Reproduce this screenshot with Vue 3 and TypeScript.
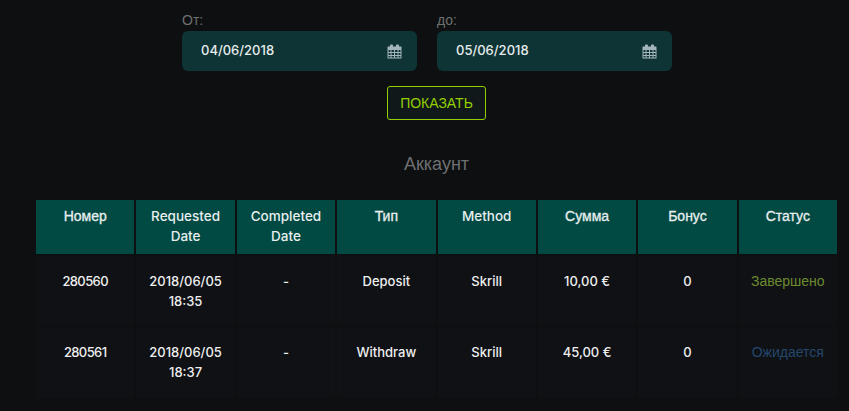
<script setup lang="ts">
interface Row {
  id: string;
  requested: string;
  time: string;
  type: string;
  amount: string;
  bonus: string;
  status: string;
  statusClass: string;
}

const rows: Row[] = [
  { id: "280560", requested: "2018/06/05", time: "18:35", type: "Deposit", amount: "10,00 €", bonus: "0", status: "Завершено", statusClass: "done" },
  { id: "280561", requested: "2018/06/05", time: "18:37", type: "Withdraw", amount: "45,00 €", bonus: "0", status: "Ожидается", statusClass: "pending" },
];
const dates = [
  { label: "От:", value: "04/06/2018" },
  { label: "до:", value: "05/06/2018" },
];
</script>

<template>
  <div class="page">
    <div class="filters">
      <div v-for="d in dates" :key="d.label" class="field">
        <label>{{ d.label }}</label>
        <div class="input">
          <span>{{ d.value }}</span>
          <svg width="15" height="15" viewBox="0 0 15 15" class="cal">
            <path fill="#a3b5ba" fill-rule="evenodd" d="M1 2.5h2V1.5a1 1 0 0 1 1-1h1a1 1 0 0 1 1 1v1h3v-1a1 1 0 0 1 1-1h1a1 1 0 0 1 1 1v1h2a.5.5 0 0 1 .5.5v11a.5.5 0 0 1-.5.5H1a.5.5 0 0 1-.5-.5V3a.5.5 0 0 1 .5-.5zM1.500 6v2h2V6zm3 0v2h2.500V6zm3.500 0v2h2.500V6zm3.500 0v2h2V6zM1.500 9v2h2V9zm3 0v2h2.500V9zm3.500 0v2h2.500V9zm3.500 0v2h2V9zM1.500 12v1.500h2V12zm3 0v1.500h2.500V12zm3.500 0v1.500h2.500V12zm3.500 0v1.500h2V12z" />
          </svg>
        </div>
      </div>
    </div>
    <button class="show">ПОКАЗАТЬ</button>
    <h2>Аккаунт</h2>
    <table>
      <thead>
        <tr>
          <th class="ru">Номер</th>
          <th>Requested Date</th>
          <th>Completed Date</th>
          <th class="ru">Тип</th>
          <th>Method</th>
          <th class="ru">Сумма</th>
          <th class="ru">Бонус</th>
          <th class="ru">Статус</th>
        </tr>
      </thead>
      <tbody>
        <tr v-for="r in rows" :key="r.id">
          <td class="id">{{ r.id }}</td>
          <td>{{ r.requested }}<br />{{ r.time }}</td>
          <td>-</td>
          <td>{{ r.type }}</td>
          <td>Skrill</td>
          <td>{{ r.amount }}</td>
          <td>{{ r.bonus }}</td>
          <td class="ru" :class="r.statusClass">{{ r.status }}</td>
        </tr>
      </tbody>
    </table>
  </div>
</template>

<style>
html,
body {
  background: #0d0f11;
}
</style>

<style scoped>
.page {
  margin: 0 10px 0 34px;
  height: 411px;
  overflow: hidden;
  display: flex;
  flex-direction: column;
  align-items: center;
  font-family: "Inter", "Liberation Sans", sans-serif;
  color: #eee;
}

.filters {
  display: flex;
  gap: 20px;
  margin-right: 19px;
  padding-top: 12px;
}

.field {
  width: 235px;
}

label {
  display: block;
  font-family: "Liberation Sans", sans-serif;
  font-size: 14px;
  line-height: 16px;
  height: 19px;
  color: #6d6f70;
}

.input {
  height: 40px;
  background: #0f3435;
  border-radius: 6px;
  display: flex;
  align-items: center;
  justify-content: space-between;
  padding: 0 15px 2px 19px;
  box-sizing: border-box;
  font-size: 13px;
  font-weight: 500;
  color: #e6ecec;
}

.cal {
  display: block;
  margin-top: 2px;
}

.show {
  margin-top: 15px;
  width: 99px;
  height: 34px;
  padding: 0;
  background: #10181a;
  border: 1px solid #94d000;
  border-radius: 3px;
  color: #94d000;
  font-family: "Liberation Sans", sans-serif;
  font-size: 14px;
}

h2 {
  margin: 33px 0 0;
  font-family: "Liberation Sans", sans-serif;
  font-weight: 400;
  font-size: 18px;
  line-height: 22px;
  color: #6e7071;
}

table {
  margin-top: 23px;
  width: 805px;
  table-layout: fixed;
  border-collapse: separate;
  border-spacing: 2px;
  font-size: 13px;
}

th {
  height: 54px;
  padding: 6px 8px 0;
  box-sizing: border-box;
  vertical-align: top;
  background: #004a43;
  color: #e8eeee;
  font-weight: 500;
  font-size: 13.5px;
  line-height: 20px;
}

th.ru {
  font-family: "Liberation Sans", sans-serif;
  font-weight: 400;
  font-size: 14px;
  -webkit-text-stroke: 0.3px #e8eeee;
}

td {
  height: 69px;
  padding: 15px 8px 0;
  box-sizing: border-box;
  vertical-align: top;
  text-align: center;
  background: #0f1115;
  line-height: 20px;
  font-weight: 500;
}

tr:last-child td {
  height: 71px;
}

td.id {
  letter-spacing: -0.6px;
}

td.ru {
  font-family: "Liberation Sans", sans-serif;
  font-size: 14px;
  font-weight: 400;
}

.done {
  color: #6d8a2e;
}

.pending {
  color: #24486b;
}
</style>
